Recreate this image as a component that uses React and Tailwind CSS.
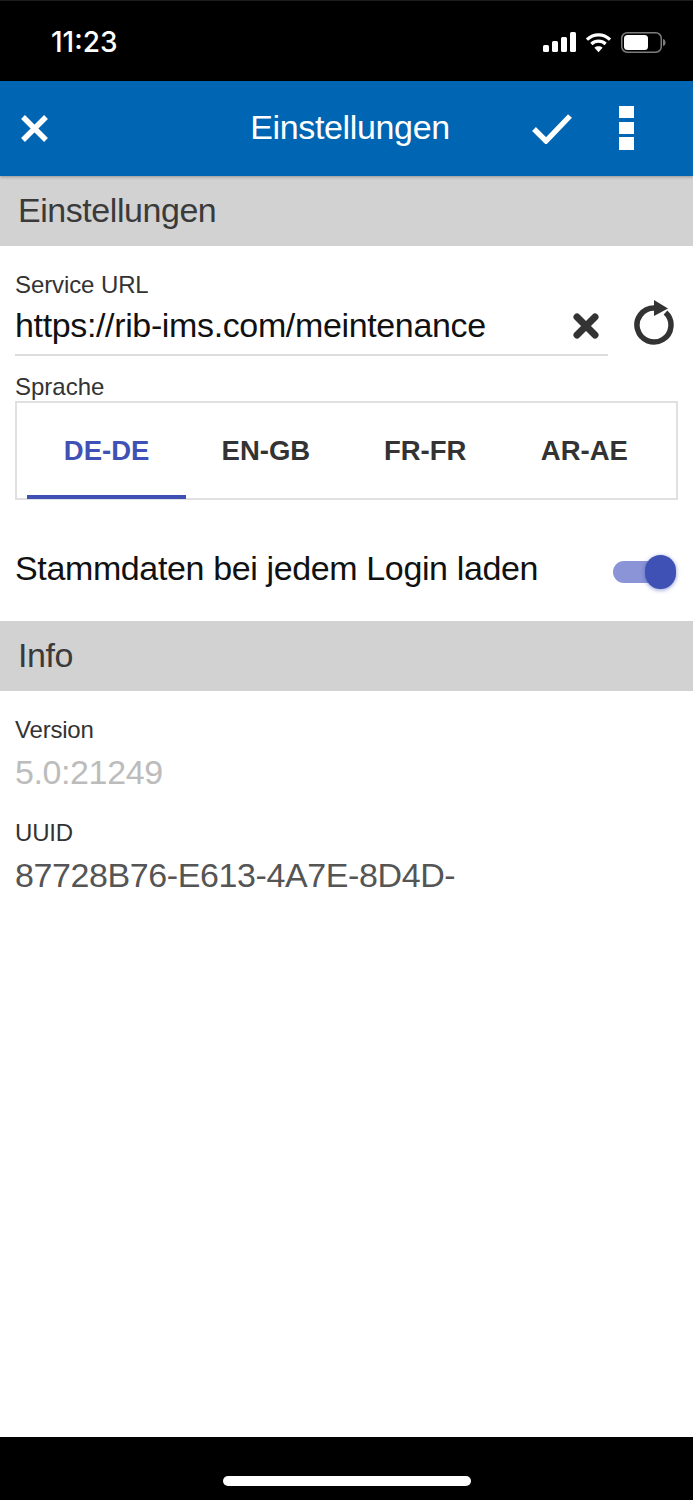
const tabs = ['DE-DE', 'EN-GB', 'FR-FR', 'AR-AE']

function SectionHeader({ title }) {
  return (
    <div className="h-[70px] flex items-center pl-[18px] pb-[2px] bg-[#d2d2d2] text-[34px] tracking-[-0.45px] text-[#3a3a3a]">
      {title}
    </div>
  )
}

function StatusBar() {
  return (
    <div className="h-[81px] bg-black border-t border-[#1c1c1c] flex items-center justify-between pl-[51px] pr-[27px] pt-[2px] text-white">
      <span className="font-['Inter',sans-serif] text-[28px] font-medium leading-none">11:23</span>
      <div className="flex items-center gap-[9px]">
        <svg width="33" height="20" viewBox="0 0 33 20" fill="white">
          <rect x="0" y="13" width="6" height="7" rx="1.5" />
          <rect x="9" y="9" width="6" height="11" rx="1.5" />
          <rect x="18" y="5" width="6" height="15" rx="1.5" />
          <rect x="27" y="0" width="6" height="20" rx="1.5" />
        </svg>
        <svg width="27" height="21" viewBox="0 0 28 21" fill="none" stroke="white" strokeWidth="3.4">
          <path d="M2 7.5 C9 1 19 1 26 7.5" />
          <path d="M6.6 12 C11 8 17 8 21.4 12" />
          <path d="M14 20.5 L9.8 16 C12 14 16 14 18.2 16 Z" fill="white" stroke="none" />
        </svg>
        <svg width="45" height="21" viewBox="0 0 45 21" fill="none">
          <rect x="0.75" y="0.75" width="39.5" height="19.5" rx="5.5" stroke="#7c7c7c" strokeWidth="1.5" />
          <rect x="3" y="3" width="24" height="15" rx="3.5" fill="white" />
          <path d="M42 7 C44 7.5 44.5 9 44.5 10.5 C44.5 12 44 13.5 42 14 Z" fill="#7c7c7c" />
        </svg>
      </div>
    </div>
  )
}

function TopBar() {
  return (
    <div className="h-[95px] bg-[#0066b3] flex items-center relative z-10 shadow-[0_1px_3px_rgba(0,0,0,0.3)] text-white">
      <div className="w-[250px] pl-[21px]">
        <svg width="27" height="27" viewBox="0 0 27 27" stroke="white" strokeWidth="5.4">
          <path d="M2 2 L25 25 M25 2 L2 25" />
        </svg>
      </div>
      <div className="w-[200px] text-center text-[34px] tracking-[-0.35px] leading-none pb-[3px]">Einstellungen</div>
      <div className="ml-[82px] pt-[1px]">
        <svg width="40" height="30" viewBox="0 0 40 30" fill="none" stroke="white" strokeWidth="5.4">
          <path d="M2 15 L14 27 L38 2" />
        </svg>
      </div>
      <div className="ml-[47px] mb-[1px] flex flex-col">
        <div className="w-[15px] h-[12px] bg-white" />
        <div className="w-[15px] h-[12px] mt-[4px] bg-white" />
        <div className="w-[15px] h-[13px] mt-[3px] bg-white" />
      </div>
    </div>
  )
}

function UrlField() {
  return (
    <div className="flex items-start pl-[15px] pr-[17px]">
      <div className="w-[593px] h-[51px] border-b-2 border-[#dcdcdc] flex items-start justify-between pr-[8px]">
        <span className="text-[34px] tracking-[-0.36px] leading-[41px] text-[#111]">https://rib-ims.com/meintenance</span>
        <svg className="mt-[7px]" width="28" height="28" viewBox="0 0 28 28" stroke="#333" strokeWidth="7" strokeLinecap="round">
          <path d="M5 5 L23 23 M23 5 L5 23" />
        </svg>
      </div>
      <svg className="ml-[26px] -mt-[8px]" width="42" height="50" viewBox="0 0 42 50" fill="none">
        <path d="M31.5 15.5 A17 17 0 1 1 20 11" stroke="#333" strokeWidth="5.5" />
        <path d="M20 3 L34 11.5 L20 19 Z" fill="#333" />
      </svg>
    </div>
  )
}

function LanguageTabs() {
  return (
    <div className="mx-[15px] h-[99px] border-2 border-[#e0e0e0] flex pl-[10px] pr-[12px]">
      {tabs.map((tab, i) => (
        <div
          key={tab}
          className={
            i === 0
              ? 'flex-1 flex items-center justify-center pt-[4px] -mb-[1px] text-[27.5px] font-bold text-[#3f51b5] border-b-4 border-[#3f51b5]'
              : 'flex-1 flex items-center justify-center pt-[4px] -mb-[1px] text-[27.5px] font-bold text-[#333] border-b-4 border-transparent'
          }
        >
          {tab}
        </div>
      ))}
    </div>
  )
}

function Toggle() {
  return (
    <div className="flex items-center mt-[8px]">
      <div className="w-[46px] h-[22px] rounded-full bg-[#8a94d6]" />
      <div className="w-[31px] h-[34px] -ml-[14px] rounded-full bg-[#3f51b5] shadow-[0_1px_4px_rgba(63,81,181,0.6)]" />
    </div>
  )
}

export default function App() {
  return (
    <div className="w-[693px] h-[1500px] flex flex-col bg-white font-['Liberation_Sans',Arial,sans-serif]">
      <StatusBar />
      <TopBar />
      <SectionHeader title="Einstellungen" />

      <div className="flex-none pt-[25px]">
        <div className="pl-[15px] text-[24px] tracking-[-0.1px] leading-[28px] text-[#333] mb-[6px]">Service URL</div>
        <UrlField />
        <div className="pl-[15px] text-[24px] leading-[28px] text-[#333] mt-[17px]">Sprache</div>
        <LanguageTabs />
        <div className="h-[121px] flex items-center justify-between pl-[15px] pr-[17px] pt-[14px]">
          <span className="text-[34px] tracking-[-0.37px] leading-none text-[#111]">Stammdaten bei jedem Login laden</span>
          <Toggle />
        </div>
      </div>

      <SectionHeader title="Info" />

      <div className="flex-1 pl-[15px] pt-[25px]">
        <div className="text-[24px] tracking-[-0.2px] leading-[28px] text-[#333]">Version</div>
        <div className="text-[34px] tracking-[-0.4px] leading-[40px] mt-[8px] text-[#bcbcbc]">5.0:21249</div>
        <div className="text-[24px] tracking-[-0.2px] leading-[28px] mt-[27px] text-[#333]">UUID</div>
        <div className="text-[34px] tracking-[-0.4px] leading-[40px] mt-[8px] text-[#555]">87728B76-E613-4A7E-8D4D-</div>
      </div>

      <div className="h-[63px] bg-black flex justify-center pt-[39px]">
        <div className="w-[248px] h-[10px] rounded-full bg-white" />
      </div>
    </div>
  )
}
